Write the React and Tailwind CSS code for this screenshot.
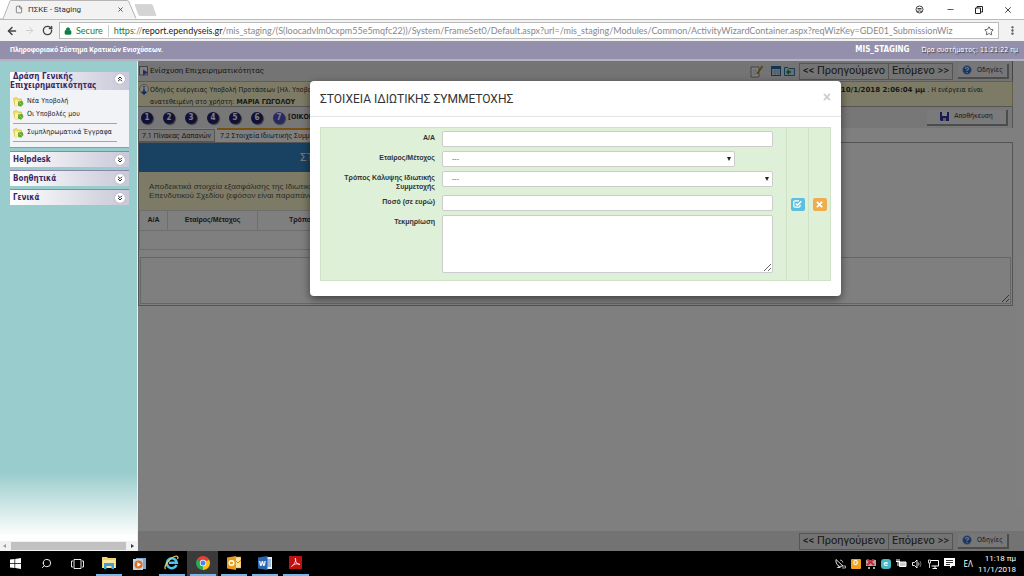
import { ArrowLeft, ArrowRight, RotateCw, Lock, Star, MoreVertical, File, X, Minus, Search, ChevronsUp, ChevronsDown } from 'lucide-react'
import { FaTimes } from 'react-icons/fa'

const steps = [1, 2, 3, 4, 5, 6, 7]

const closedPanels = ['Helpdesk', 'Βοηθητικά', 'Γενικά']

function BrowserBar() {
  return (
    <header className="font-[Roboto,sans-serif] text-[#333]">
      <div className="flex h-[19px] items-stretch bg-white">
        <div className="relative flex w-[136px] items-center">
          <svg className="absolute inset-0" width="160" height="19" viewBox="0 0 160 19">
            <path d="M0 19 H3 L10 1 Q10.500 0.500 11 0.500 H127 Q128 0.500 128.500 1 L136 18.500" fill="#f2f2f2" stroke="#b5b5b5" strokeWidth="1" />
            <path d="M135 4.500 H151 Q152 4.500 152.500 5.500 L156 15.500 H140 Q139 15.500 138.500 14.500 Z" fill="#d4d4d4" stroke="#c2c2c2" strokeWidth="0.500" />
          </svg>
          <div className="relative flex w-full items-center pl-[15px] pr-3">
            <File className="h-[9px] w-[8px] text-[#555]" />
            <span className="ml-[5px] flex-1 text-[8px] leading-[10px]">ΠΣΚΕ - Staging</span>
            <button aria-label="Close tab"><X className="h-[7px] w-[7px] text-[#444]" strokeWidth={3} /></button>
          </div>
        </div>
        <div className="ml-auto flex items-center gap-5 pr-[11px] text-[#222]">
          <button aria-label="Profile" className="mr-[2px]">
            <svg width="9" height="9" viewBox="0 0 9 9">
              <circle cx="4.500" cy="4.500" r="3.500" fill="#fff" stroke="#444" />
              <path d="M2.500 3 H6.500 V4.500 H2.500 Z" fill="#444" />
              <path d="M2 6.500 Q4.500 5.200 7 6.500" stroke="#444" fill="none" />
            </svg>
          </button>
          <button aria-label="Minimize"><Minus className="h-[9px] w-[9px]" /></button>
          <button aria-label="Restore">
            <svg width="8" height="8" viewBox="0 0 8 8">
              <path d="M0.500 2 H5.500 V7.500 H0.500 Z M2 2 V0.500 H7.500 V6 H5.500" fill="none" stroke="#222" />
            </svg>
          </button>
          <button aria-label="Close"><X className="h-[10px] w-[10px]" /></button>
        </div>
      </div>
      <div className="flex h-[22px] items-center border-t border-[#bbb] bg-[#f2f2f2] pl-[6px] pr-[6px]">
        <button aria-label="Back"><ArrowLeft className="h-[12px] w-[12px] text-[#444]" strokeWidth={3} /></button>
        <button aria-label="Forward" className="ml-[6px]"><ArrowRight className="h-[11px] w-[11px] text-[#ccc]" /></button>
        <button aria-label="Reload" className="ml-[7px]"><RotateCw className="h-[11px] w-[11px] text-[#444]" strokeWidth={3} /></button>
        <div className="ml-[6px] flex h-[17px] min-w-0 flex-1 items-center border border-[#bbb] bg-white pl-1 pr-1 font-[Lato,sans-serif] text-[9px] leading-[12px]">
          <Lock className="h-[8px] w-[8px] shrink-0 fill-[#0b8043] text-[#0b8043]" />
          <span className="ml-1 text-[#0b8043]">Secure</span>
          <span className="mx-[5px] h-3 w-px bg-[#ccc]" />
          <span className="min-w-0 flex-1 truncate text-[#888]">
            <span className="text-[#0b8043]">https</span>://<span className="text-[#222]">report.ependyseis.gr</span>/mis_staging/(S(loocadvlm0cxpm55e5mqfc22))/System/FrameSet0/Default.aspx?url=/mis_staging/Modules/Common/ActivityWizardContainer.aspx?reqWizKey=GDE01_SubmissionWiz
          </span>
          <button aria-label="Bookmark"><Star className="h-[10px] w-[10px] text-[#444]" /></button>
        </div>
        <button aria-label="Menu" className="ml-[8px]"><MoreVertical className="h-[11px] w-[11px] text-[#444]" strokeWidth={3} /></button>
      </div>
    </header>
  )
}

function FolderIcon() {
  return (
    <svg className="shrink-0" width="11" height="10" viewBox="0 0 11 10">
      <path d="M0.500 1.500 L3.500 0.500 L5 2 H8.500 V8.500 L2 9 Z" fill="#f1df6c" stroke="#c9b037" strokeWidth="0.600" />
      <path d="M2 3.500 H6 V8.500 L2 9 Z" fill="#fbf3a6" />
      <path d="M5 4.500 L9.500 4 L10.500 7 L8 9.800 L5 8.500 Z" fill="#62a832" />
      <path d="M6.500 5.500 L8.500 7.500" stroke="#a9d978" strokeWidth="0.900" fill="none" />
    </svg>
  )
}

function SideLink({ children }) {
  return (
    <a href="#" className="flex items-center gap-[3px] py-px">
      <FolderIcon />
      <span>{children}</span>
    </a>
  )
}

function Chevron({ up }) {
  const Icon = up ? ChevronsUp : ChevronsDown
  return (
    <span className="flex h-[10px] w-[10px] shrink-0 items-center justify-center rounded-full bg-white shadow-[0_0_1px_#888]">
      <Icon className="h-[8px] w-[8px] text-[#222]" strokeWidth={3} />
    </span>
  )
}

function Sidebar() {
  return (
    <aside className="flex w-[138px] shrink-0 flex-col border-r border-[#e4f2f2] bg-linear-to-b from-[#99cccc] from-84% to-white to-97% font-['DejaVu_Sans_Condensed','DejaVu_Sans',sans-serif]">
      <nav className="flex flex-1 flex-col gap-[3px] px-[10px] pt-[11px] pr-[8px]">
        <section className="border-b border-[#9a94b5] bg-[#f2f3f7]">
          <button className="flex w-full items-start justify-between bg-linear-to-r from-white to-[#c8c8d8] pr-1 text-left text-[8px] leading-[9px] font-bold text-[#3b2a66]">
            <span><span className="pl-[3px]">Δράση Γενικής</span><br />Επιχειρηματικότητας</span>
            <span className="pt-[2px]"><Chevron up /></span>
          </button>
          <div className="px-[3px] pt-[5px] pr-3 pb-[5px] text-[7px] leading-[11px] text-[#222]">
            <SideLink>Νέα Υποβολή</SideLink>
            <SideLink>Οι Υποβολές μου</SideLink>
            <hr className="my-[2px] border-[#a5a5a5]" />
            <SideLink>Συμπληρωματικά Έγγραφα</SideLink>
            <hr className="mt-[2px] border-[#a5a5a5]" />
          </div>
        </section>
        {closedPanels.map((title) => (
          <button key={title} className="flex h-[16px] items-center justify-between border-t border-[#8d86ab] bg-linear-to-r from-white to-[#c8c8d8] pr-1 pl-[3px] text-[8px] leading-[10px] font-bold text-[#3b2a66]">
            {title}
            <Chevron />
          </button>
        ))}
      </nav>
      <div className="flex h-[10px] items-center justify-between bg-[#f1f1f1] px-[3px]">
        <span className="border-y-2 border-r-3 border-y-transparent border-r-[#999]" />
        <span className="mx-[5px] h-[8px] flex-1 bg-[#c1c1c1]" />
        <span className="border-y-2 border-l-3 border-y-transparent border-l-[#333]" />
      </div>
    </aside>
  )
}

function HelpIcon() {
  return (
    <svg width="10" height="10" viewBox="0 0 10 10">
      <circle cx="5" cy="5" r="4.500" fill="#2f6fd0" stroke="#b9cbe6" strokeWidth="0.800" />
      <path d="M3.500 4 Q3.500 2.500 5 2.500 Q6.500 2.500 6.500 3.800 Q6.500 4.600 5 5.300 V6 M5 7 V8" stroke="#fff" strokeWidth="1.100" fill="none" />
    </svg>
  )
}

function WizardNav() {
  return (
    <div className="flex items-center">
      <button className="h-[17px] border border-[#aaa] px-[3px] font-[Roboto,sans-serif] text-[11px] leading-[14px]">&lt;&lt; Προηγούμενο</button>
      <button className="h-[17px] border border-l-0 border-[#aaa] px-[3px] font-[Roboto,sans-serif] text-[11px] leading-[14px]">Επόμενο &gt;&gt;</button>
      <button className="ml-[5px] flex h-[15px] w-[51px] items-center justify-center gap-[5px] border-r-2 border-b-2 border-[#999] bg-[#efefef] text-[7px]">
        <HelpIcon />
        Οδηγίες
      </button>
    </div>
  )
}

function Page() {
  return (
    <div className="flex h-full flex-col bg-white pr-[11px] font-['DejaVu_Sans_Condensed','DejaVu_Sans',sans-serif] text-[#333]">
      <div className="flex h-[20px] items-center border-r border-[#888] bg-[#e9e9e9] pr-[3px] pl-px text-[8px]">
        <svg width="10" height="10" viewBox="0 0 10 10">
          <rect x="0.500" y="0.500" width="8" height="8.500" fill="#fff" stroke="#889" />
          <path d="M4 3.500 L9 6.500 L4 9.500 Z" fill="#4a5cc0" />
        </svg>
        <span className="ml-px font-[Roboto,sans-serif]">Ενίσχυση Επιχειρηματικότητας</span>
        <div className="ml-auto flex items-center">
          <svg width="14" height="13" viewBox="0 0 14 13">
            <path d="M1 2 H9 V12 H1 Z" fill="#fff" stroke="#888" />
            <path d="M2.500 5 H7 M2.500 7 H7 M2.500 9 H6" stroke="#aaa" strokeWidth="0.700" />
            <path d="M12.500 1 L7 9" stroke="#a58b28" strokeWidth="1.700" />
          </svg>
          <svg className="ml-[7px]" width="10" height="10" viewBox="0 0 10 10">
            <rect x="0.500" y="0.500" width="9" height="9" fill="#dfeaf5" stroke="#2468a8" />
            <path d="M1 2 H9" stroke="#2468a8" strokeWidth="2" />
            <path d="M1 5 H9 M1 7 H9 M4 3 V9 M7 3 V9" stroke="#6ca5d6" strokeWidth="0.600" />
          </svg>
          <svg className="mr-[4px] ml-[3px]" width="11" height="10" viewBox="0 0 11 10">
            <path d="M0.500 1.500 H4 L5 2.500 H10.500 V9.500 H0.500 Z" fill="#c9e2f2" stroke="#3078a8" />
            <path d="M3 6 H7 M5 4 L3 6 L5 8" stroke="#168a3a" strokeWidth="1.400" fill="none" />
          </svg>
          <WizardNav />
        </div>
      </div>

      <div className="flex h-[25px] items-start border-t border-r border-[#c4bf8a] bg-[#fbf7cb] pt-[2px] text-[7px] leading-[12px]">
        <svg className="shrink-0" width="12" height="12" viewBox="0 0 12 12">
          <circle cx="6" cy="5" r="4.500" fill="#fff" stroke="#9aa" />
          <path d="M6 2 V3.500 M6 4.500 V9 M4 7.500 L6 10 L8 7.500" stroke="#2b55b8" strokeWidth="1.500" fill="none" />
        </svg>
        <p className="whitespace-nowrap">Οδηγός ενέργειας Υποβολή Προτάσεων [Ηλ. Υποβολή]<br />ανατεθειμένη στο χρήστη: <b>ΜΑΡΙΑ ΓΩΓΟΛΟΥ</b></p>
        <p className="mr-[29px] ml-auto"><b className="font-['DejaVu_Sans',sans-serif]">10/1/2018 2:06:04 μμ</b> . Η ενέργεια είναι</p>
      </div>

      <div className="flex h-[22px] items-center border-t border-r border-[#aaa] bg-[#eee] pr-[4px] pl-[3px]">
        <div className="flex gap-[10px]">
          {steps.map((n) => (
            <button
              key={n}
              className={n === 7
                ? 'h-[12px] w-[12px] rounded-full bg-[#5250c4] text-[8px] leading-[12px] font-bold text-white shadow-[1px_1px_1px_#777]'
                : 'h-[12px] w-[12px] rounded-full bg-[#22226e] text-[8px] leading-[12px] font-bold text-white shadow-[1px_1px_1px_#777]'}
            >
              {n}
            </button>
          ))}
        </div>
        <span className="ml-[3px] text-[7px] font-bold">[ΟΙΚΟΝΟΜΙΚΑ]</span>
        <button className="ml-auto flex h-[16px] w-[81px] items-center justify-center gap-[5px] border-r-2 border-b-2 border-[#999] bg-[#f4f4f4] text-[7px]">
          <svg width="9" height="9" viewBox="0 0 9 9">
            <path d="M0 0 H9 V9 H1 L0 8 Z" fill="#3034a0" />
            <path d="M2 0 H7 V4 H2 Z" fill="#fff" />
            <path d="M3 6 H6 V9 H3 Z" fill="#bbc" />
          </svg>
          Αποθήκευση
        </button>
      </div>

      <div className="flex h-[14px] items-end font-[Roboto,sans-serif] text-[7px] leading-[12px] whitespace-nowrap">
        <button className="h-[13px] border border-[#aaa] bg-[#eee] px-[3px]">7.1 Πίνακας Δαπανών</button>
        <button className="ml-[2px] h-[14px] border-t-2 border-r border-t-[#f0a020] border-r-[#999] bg-white px-[3px]">7.2 Στοιχεία Ιδιωτικής Συμμετοχής</button>
      </div>

      <div className="flex flex-col border border-[#aaa] font-['Liberation_Sans',sans-serif]">
        <h2 className="flex h-[29px] w-[420px] items-center bg-[#3282c3] pl-[161px] text-[11px] text-white">ΣΤΟΙΧΕΙΑ</h2>
        <p className="h-[38px] w-[420px] bg-[#fbf7cb] pt-[10px] pl-[10px] text-[8px] leading-[9px] text-[#555]">
          Αποδεικτικά στοιχεία εξασφάλισης της Ιδιωτικής<br />Επενδυτικού Σχεδίου (εφόσον είναι παραπάνω
        </p>
        <table className="w-[420px] table-fixed border-collapse text-[7px]">
          <thead>
            <tr className="h-[20px]">
              <th className="w-[28px] border border-[#ddd]">Α/Α</th>
              <th className="w-[90px] border border-[#ddd]">Εταίρος/Μέτοχος</th>
              <th className="border border-[#ddd] pl-[31px] text-left">Τρόπος</th>
            </tr>
          </thead>
          <tbody>
            <tr className="h-[19px]"><td colSpan={3} className="border border-[#ddd]" /></tr>
          </tbody>
        </table>
        <textarea aria-label="Σχόλια" className="m-px mt-[7px] h-[47px] border border-[#ccc]" />
      </div>

      <footer className="-mr-[11px] mt-auto flex h-[20px] items-center justify-end bg-[#e6e6e6] pr-[15px]">
        <WizardNav />
      </footer>
    </div>
  )
}

function Field({ id, label, children }) {
  return (
    <div className="flex min-h-[16px] items-start gap-[7px]">
      <label htmlFor={id} className="w-[108px] shrink-0 pt-[2px] text-right text-[7px] leading-[9px] font-bold">{label}</label>
      <div className="flex flex-1">{children}</div>
    </div>
  )
}

function SelectBox({ id, wrap }) {
  return (
    <div className={`relative ${wrap}`}>
      <select id={id} className="block h-[16px] w-full appearance-none rounded-[2px] border border-[#ccc] bg-white pl-[9px] text-[7px] text-[#555]">
        <option>---</option>
      </select>
      <span className="pointer-events-none absolute top-[6px] right-[4px] border-x-2 border-t-4 border-x-transparent border-t-[#222]" />
    </div>
  )
}

function Modal() {
  return (
    <div role="dialog" aria-labelledby="dialog-title" className="w-[531px] max-w-full rounded-[4px] bg-white font-['Liberation_Sans',sans-serif] text-[#333] shadow-[0_3px_9px_rgba(0,0,0,0.5)]">
      <div className="flex h-[36px] items-center justify-between border-b border-[#e5e5e5] px-[10px]">
        <h1 id="dialog-title" className="font-[Roboto,sans-serif] text-[12px]">ΣΤΟΙΧΕΙΑ ΙΔΙΩΤΙΚΗΣ ΣΥΜΜΕΤΟΧΗΣ</h1>
        <button aria-label="Κλείσιμο" className="pb-1 text-[14px] leading-[12px] font-bold text-[#ccc]">×</button>
      </div>
      <form className="px-[10px] pt-[10px] pb-[15px]">
        <div className="flex h-[154px] border border-[#d0e2c6] bg-[#dff0d8]">
          <div className="flex flex-1 flex-col gap-[4px] pt-[3px] pr-[13px] pl-[6px]">
            <Field id="aa" label="Α/Α">
              <input id="aa" className="h-[16px] w-full rounded-[2px] border border-[#ccc] bg-white px-1 text-[7px]" />
            </Field>
            <Field id="partner" label="Εταίρος/Μέτοχος">
              <SelectBox id="partner" wrap="w-[293px]" />
            </Field>
            <Field id="method" label="Τρόπος Κάλυψης Ιδιωτικής Συμμετοχής">
              <SelectBox id="method" wrap="w-full" />
            </Field>
            <Field id="amount" label="Ποσό (σε ευρώ)">
              <input id="amount" className="h-[16px] w-full rounded-[2px] border border-[#ccc] bg-white px-1 text-[7px]" />
            </Field>
            <Field id="proof" label="Τεκμηρίωση">
              <textarea id="proof" className="h-[58px] w-full rounded-[2px] border border-[#ccc] bg-white px-1 text-[7px]" />
            </Field>
          </div>
          <div className="flex w-[22px] items-center justify-center border-l border-[#d0e2c6]">
            <button type="button" aria-label="Αποδοχή" className="flex h-[13px] w-[14px] items-center justify-center rounded-[2px] bg-[#5bc0de]">
              <svg width="9" height="8" viewBox="0 0 9 8">
                <path d="M7 4.500 V6 Q7 7.200 5.800 7.200 H2 Q0.800 7.200 0.800 6 V2 Q0.800 0.900 2 0.900 H6" fill="none" stroke="#fff" strokeWidth="1.200" />
                <path d="M2.700 3.500 L4.300 5.200 L8.300 1.200" fill="none" stroke="#fff" strokeWidth="1.500" />
              </svg>
            </button>
          </div>
          <div className="flex w-[22px] items-center justify-center border-l border-[#d0e2c6]">
            <button type="button" aria-label="Ακύρωση" className="flex h-[13px] w-[14px] items-center justify-center rounded-[2px] bg-[#f0ad4e]">
              <FaTimes className="h-[9px] w-[9px] text-white" />
            </button>
          </div>
        </div>
      </form>
    </div>
  )
}

function Task({ label, running, active, children }) {
  return (
    <button aria-label={label} className={active ? 'flex h-full w-[31px] justify-center bg-[#3a3a3a]' : 'flex h-full w-[31px] justify-center'}>
      <span className={running ? 'flex h-full w-[26px] items-center justify-center border-b-2 border-[#76b9ed]' : 'flex h-full w-[26px] items-center justify-center'}>
        {children}
      </span>
    </button>
  )
}

function Taskbar() {
  return (
    <footer className="flex h-[25px] shrink-0 items-center bg-black font-[Roboto,sans-serif] text-white">
      <Task label="Start">
        <svg width="11" height="11" viewBox="0 0 11 11"><path d="M0 1.500 L4.500 1 V5 H0 Z M5.200 0.900 L11 0 V5 H5.200 Z M0 5.800 H4.500 V10 L0 9.400 Z M5.200 5.800 H11 V11 L5.200 10.100 Z" fill="#fff" /></svg>
      </Task>
      <Task label="Search"><Search className="h-[11px] w-[11px] -scale-x-100" /></Task>
      <Task label="Task view">
        <svg width="13" height="10" viewBox="0 0 13 10"><path d="M3 0.500 H10 V9.500 H3 Z M2 2 H0.500 V8 H2 M11 2 H12.500 V8 H11" fill="none" stroke="#fff" strokeWidth="0.900" /></svg>
      </Task>
      <Task label="Explorer" running>
        <svg width="14" height="13" viewBox="0 0 14 13">
          <path d="M0 1 H5 L6 2 H14 V12 H0 Z" fill="#f6d36b" />
          <path d="M1 4 H13 V12 H1 Z" fill="#fbe79f" />
          <path d="M2 7 H12 V13 H9.500 V10 H4.500 V13 H2 Z" fill="#3da4d8" />
        </svg>
      </Task>
      <Task label="Media Player">
        <svg width="13" height="12" viewBox="0 0 13 12">
          <path d="M3 0 H13 V11 H3 Z" fill="#7fa9cd" />
          <path d="M0 1 H10 V12 H0 Z" fill="#c3d5e4" />
          <circle cx="5.500" cy="6.500" r="4" fill="#e26f1d" />
          <path d="M4.300 4.300 L8 6.500 L4.300 8.700 Z" fill="#fff" />
        </svg>
      </Task>
      <div className="flex h-full pl-px">
        <Task label="Internet Explorer" running>
          <svg width="15" height="15" viewBox="0 0 15 15">
            <path d="M12.500 10 A5 5 0 1 1 12.800 7.700 H5" fill="none" stroke="#4cc3f1" strokeWidth="2.500" />
            <path d="M1.500 14 C-1 11 7 1.500 12.500 1 C14.500 1 14 3 13.500 4" fill="none" stroke="#f5cf45" strokeWidth="1.200" />
          </svg>
        </Task>
        <Task label="Chrome" running active>
          <svg width="14" height="14" viewBox="0 0 14 14">
            <path d="M7 7 L0.940 3.500 A7 7 0 0 1 13.060 3.500 Z" fill="#e34133" />
            <path d="M7 7 L13.060 3.500 A7 7 0 0 1 7 14 Z" fill="#fbc116" />
            <path d="M7 7 L7 14 A7 7 0 0 1 0.940 3.500 Z" fill="#2da94f" />
            <circle cx="7" cy="7" r="3.200" fill="#fff" />
            <circle cx="7" cy="7" r="2.500" fill="#4285f4" />
          </svg>
        </Task>
        <Task label="Outlook" running>
          <svg width="14" height="14" viewBox="0 0 14 14">
            <path d="M7 1 H14 V12 H7 Z" fill="#fbe3a0" stroke="#d98f0e" strokeWidth="0.500" />
            <path d="M8 4 L11 7 L14 4" fill="none" stroke="#d98f0e" />
            <path d="M0 1.500 L9 0 V14 L0 12.500 Z" fill="#e79d1c" />
            <circle cx="4.500" cy="7" r="2.300" fill="none" stroke="#fff" strokeWidth="1.400" />
          </svg>
        </Task>
        <Task label="Word" running>
          <svg width="14" height="14" viewBox="0 0 14 14">
            <path d="M7 1 H14 V13 H7 Z" fill="#eaf2fb" />
            <path d="M9 4 H13 M9 6 H13 M9 8 H13 M9 10 H13" stroke="#2b66b1" strokeWidth="0.800" />
            <path d="M0 1.500 L9.500 0 V14 L0 12.500 Z" fill="#2b66b1" />
            <text x="0.800" y="10" fontSize="8" fontWeight="bold" fill="#fff">W</text>
          </svg>
        </Task>
        <Task label="Acrobat" running>
          <svg width="13" height="13" viewBox="0 0 13 13">
            <rect width="13" height="13" fill="#c20f10" />
            <path d="M6.300 2 C7.500 4 6 8 2.500 10.500 C4.500 8 9 7 11 8.500 C8.500 8.800 6 5.500 6.300 2" fill="none" stroke="#fff" strokeWidth="0.800" />
          </svg>
        </Task>
      </div>

      <div className="ml-auto flex items-center gap-[5px] pr-2">
        <svg width="11" height="11" viewBox="0 0 11 11">
          <path d="M1 1.500 L8 8 Q4 9.500 2 6.500 Q0.500 4 1 1.500 Z" fill="none" stroke="#ddd" />
          <path d="M1.500 10 H6 L4 8 Z" fill="#ddd" />
          <path d="M5 2 Q7.500 2 8 4.500 M8 8 H10.500 V10 H7" fill="none" stroke="#aaa" />
        </svg>
        <span className="flex h-[10px] w-[10px] items-center justify-center rounded-[1px] bg-[#f2a31b] text-[7px] font-bold">O</span>
        <svg width="10" height="10" viewBox="0 0 10 10"><path d="M0 1 H10 V7 H0 Z M2 8 H4 V10 H2 Z M7 8 H9 V10 H7 Z" fill="#aaa" /><path d="M1 0 L8 6 M8 0 L1 6" stroke="#d22331" strokeWidth="2" /></svg>
        <span className="flex h-[10px] w-[10px] items-center justify-center rounded-[3px] bg-[#49b8c4] text-[8px] leading-[8px] font-bold">e</span>
        <svg width="11" height="9" viewBox="0 0 11 9">
          <path d="M3.500 3 H10 V7.500 H3.500 Z" fill="#ccc" stroke="#fff" />
          <path d="M1 0 V2 M3 0 V2 M0 2.500 H4 M2 3 V7" stroke="#fff" fill="none" />
        </svg>
        <svg width="11" height="10" viewBox="0 0 11 10">
          <path d="M0.500 3.500 H2.500 L5 1 V9 L2.500 6.500 H0.500 Z" fill="none" stroke="#fff" strokeWidth="0.900" />
          <path d="M6.500 3.500 Q7.500 5 6.500 6.500" fill="none" stroke="#fff" strokeWidth="0.800" />
          <path d="M8 2 Q10 5 8 8" fill="none" stroke="#888" strokeWidth="0.800" />
        </svg>
        <svg width="11" height="10" viewBox="0 0 11 10">
          <path d="M3 1.500 H10.500 V7 H3.500 M7 7 V9 M4.500 9.500 H9" fill="none" stroke="#fff" />
          <path d="M0.500 1 H2.500 V4 H0.500 Z M1.500 4 V9" fill="none" stroke="#fff" strokeWidth="0.800" />
        </svg>
        <svg width="11" height="11" viewBox="0 0 11 11">
          <path d="M0 0 H11 V8 H8 L6 10.500 V8 H0 Z" fill="#fff" />
          <path d="M2 2.500 H9 M2 4.500 H9 M2 6.500 H6" stroke="#000" strokeWidth="0.800" />
        </svg>
        <span className="ml-1 font-['Noto_Sans',sans-serif] text-[8px]">ΕΛ</span>
        <div className="text-right text-[8px] leading-[11px]">
          <div>11:18 πμ</div>
          <div>11/1/2018</div>
        </div>
      </div>
    </footer>
  )
}

export default function App() {
  return (
    <div className="flex h-screen flex-col overflow-hidden">
      <BrowserBar />
      <div className="flex h-[20px] shrink-0 items-center justify-between border-b-2 border-[#b4b4c0] bg-[#9490ac] px-[10px] pr-[6px] font-['DejaVu_Sans_Condensed','DejaVu_Sans',sans-serif] text-[7px] text-white">
        <b className="font-[Roboto,sans-serif]">Πληροφοριακό Σύστημα Κρατικών Ενισχύσεων.</b>
        <div className="flex items-center gap-3">
          <b className="text-[8px]">MIS_STAGING</b>
          <span className="[text-shadow:1px_1px_1px_#333]">Ώρα συστήματος: 11:21:22 πμ</span>
        </div>
      </div>
      <div className="flex min-h-0 flex-1">
        <Sidebar />
        <main className="relative min-w-0 flex-1">
          <Page />
          <div className="absolute inset-0 flex items-start justify-center bg-black/50 pt-[20px] pr-[11px]">
            <Modal />
          </div>
        </main>
      </div>
      <Taskbar />
    </div>
  )
}
